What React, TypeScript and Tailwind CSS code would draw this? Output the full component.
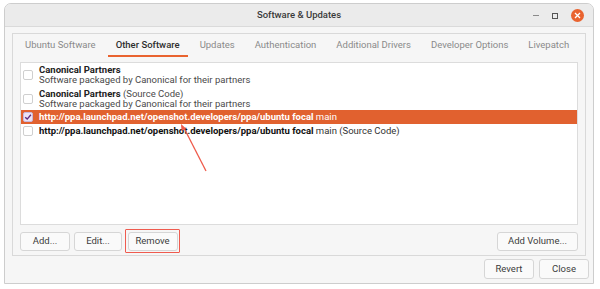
import React from "react";

const TABS = [
  "Ubuntu Software",
  "Other Software",
  "Updates",
  "Authentication",
  "Additional Drivers",
  "Developer Options",
  "Livepatch",
];

const Check = ({ on = false }: { on?: boolean }) => (
  <span
    className={
      "flex h-[10px] w-[10px] shrink-0 items-center justify-center rounded-[2px] border " +
      (on ? "border-[#c9b7dc] bg-[#ece3f5]" : "border-[#cfcfcf] bg-white")
    }
  >
    {on && (
      <svg width="8" height="8" viewBox="0 0 8 8">
        <path d="M1.2 4.2 L3.2 6.1 L6.9 1.8" fill="none" stroke="#5e2c80" strokeWidth="1.4" />
      </svg>
    )}
  </span>
);

const Btn = ({ children, className = "" }: { children: React.ReactNode; className?: string }) => (
  <div
    className={
      "flex h-[19px] items-center justify-center whitespace-nowrap rounded-[3px] border border-[#d6d6d6] bg-[#fafafa] text-[9.5px] text-[#3c3c3c] " +
      className
    }
  >
    {children}
  </div>
);

export default function App() {
  return (
    <div
      className="relative h-[289px] w-[600px] overflow-hidden bg-white pl-[4px] pt-[3px]"
      style={{ fontFamily: 'Roboto, "Noto Sans", sans-serif' }}
    >
      <div className="flex h-[281px] w-[590px] flex-col overflow-hidden rounded-t-[7px] border border-[#cdcdcd] bg-[#f6f6f6]">
        {/* title bar */}
        <div className="relative flex h-[23px] shrink-0 items-center justify-center border-b border-[#dadada] bg-[#ebebeb]">
          <span className="text-[9.5px] font-medium text-[#3a3a3a]">Software &amp; Updates</span>
          <div className="absolute right-[9px] top-[5px] flex items-center gap-[13px]">
            <span className="block h-px w-[6px] bg-[#8a8a8a]" />
            <span className="block h-[6px] w-[6px] border border-[#555]" />
            <span className="flex h-[13px] w-[13px] items-center justify-center rounded-full bg-[#e9632f]">
              <svg width="7" height="7" viewBox="0 0 7 7">
                <path d="M1 1 L6 6 M6 1 L1 6" stroke="white" strokeWidth="1.3" />
              </svg>
            </span>
          </div>
        </div>

        {/* notebook */}
        <div className="mx-[7px] mt-[6px] flex h-[223px] flex-col border border-[#d9d9d9] bg-[#f6f6f6]">
          <div className="flex h-[23px] shrink-0 items-stretch gap-[4px] pl-[4px]">
            {TABS.map((t) => (
              <div
                key={t}
                className={
                  "flex items-center whitespace-nowrap border-b-2 px-[8px] pt-[1px] text-[9.5px] " +
                  (t === "Other Software"
                    ? "border-[#e9632f] font-medium text-[#2e2e2e]"
                    : "border-transparent text-[#8a8a8a]")
                }
              >
                {t}
              </div>
            ))}
          </div>

          <div className="mx-[7px] mt-[5px] h-[163px] border border-[#dcdcdc] bg-white text-[9.5px] leading-[10px] text-[#333]">
            <div className="flex items-center gap-[6px] px-[2px] py-[2px]">
              <Check />
              <div>
                <div className="font-bold text-[#222]">Canonical Partners</div>
                <div className="text-[#4a4a4a]">Software packaged by Canonical for their partners</div>
              </div>
            </div>
            <div className="flex items-center gap-[6px] px-[2px] pb-[1px] pt-[2px]">
              <Check />
              <div>
                <div className="text-[#4a4a4a]">
                  <span className="font-bold text-[#222]">Canonical Partners</span> (Source Code)
                </div>
                <div className="text-[#4a4a4a]">Software packaged by Canonical for their partners</div>
              </div>
            </div>
            <div className="flex h-[14px] items-center gap-[6px] bg-[#e1612f] px-[2px] text-white">
              <Check on />
              <div>
                <span className="font-bold">http://ppa.launchpad.net/openshot.developers/ppa/ubuntu focal</span> main
              </div>
            </div>
            <div className="flex h-[14px] items-center gap-[6px] px-[2px]">
              <Check />
              <div className="text-[#333]">
                <span className="font-bold text-[#111]">http://ppa.launchpad.net/openshot.developers/ppa/ubuntu focal</span> main (Source Code)
              </div>
            </div>
          </div>

          <div className="mx-[7px] mt-[4px] flex items-center">
            <Btn className="w-[50px]">Add...</Btn>
            <Btn className="ml-[4px] w-[48px]">Edit...</Btn>
            <div className="ml-[3px] rounded-[1px] border-[1.5px] border-[#ef5b4f] p-[1.5px]">
              <Btn className="w-[50px]">Remove</Btn>
            </div>
            <Btn className="ml-auto w-[81px]">Add Volume...</Btn>
          </div>
        </div>

        {/* footer */}
        <div className="mr-[4px] mt-[3px] flex justify-end gap-[5px]">
          <Btn className="h-[20px] w-[50px]">Revert</Btn>
          <Btn className="h-[20px] w-[50px]">Close</Btn>
        </div>
      </div>

      {/* annotation arrow */}
      <svg className="pointer-events-none absolute left-0 top-0" width="600" height="289">
        <line x1="206" y1="171" x2="184" y2="128" stroke="#ef5a4a" strokeWidth="1.3" />
        <path d="M181 124 L181.5 131 L186 128.5 Z" fill="#ef5a4a" />
      </svg>
    </div>
  );
}
